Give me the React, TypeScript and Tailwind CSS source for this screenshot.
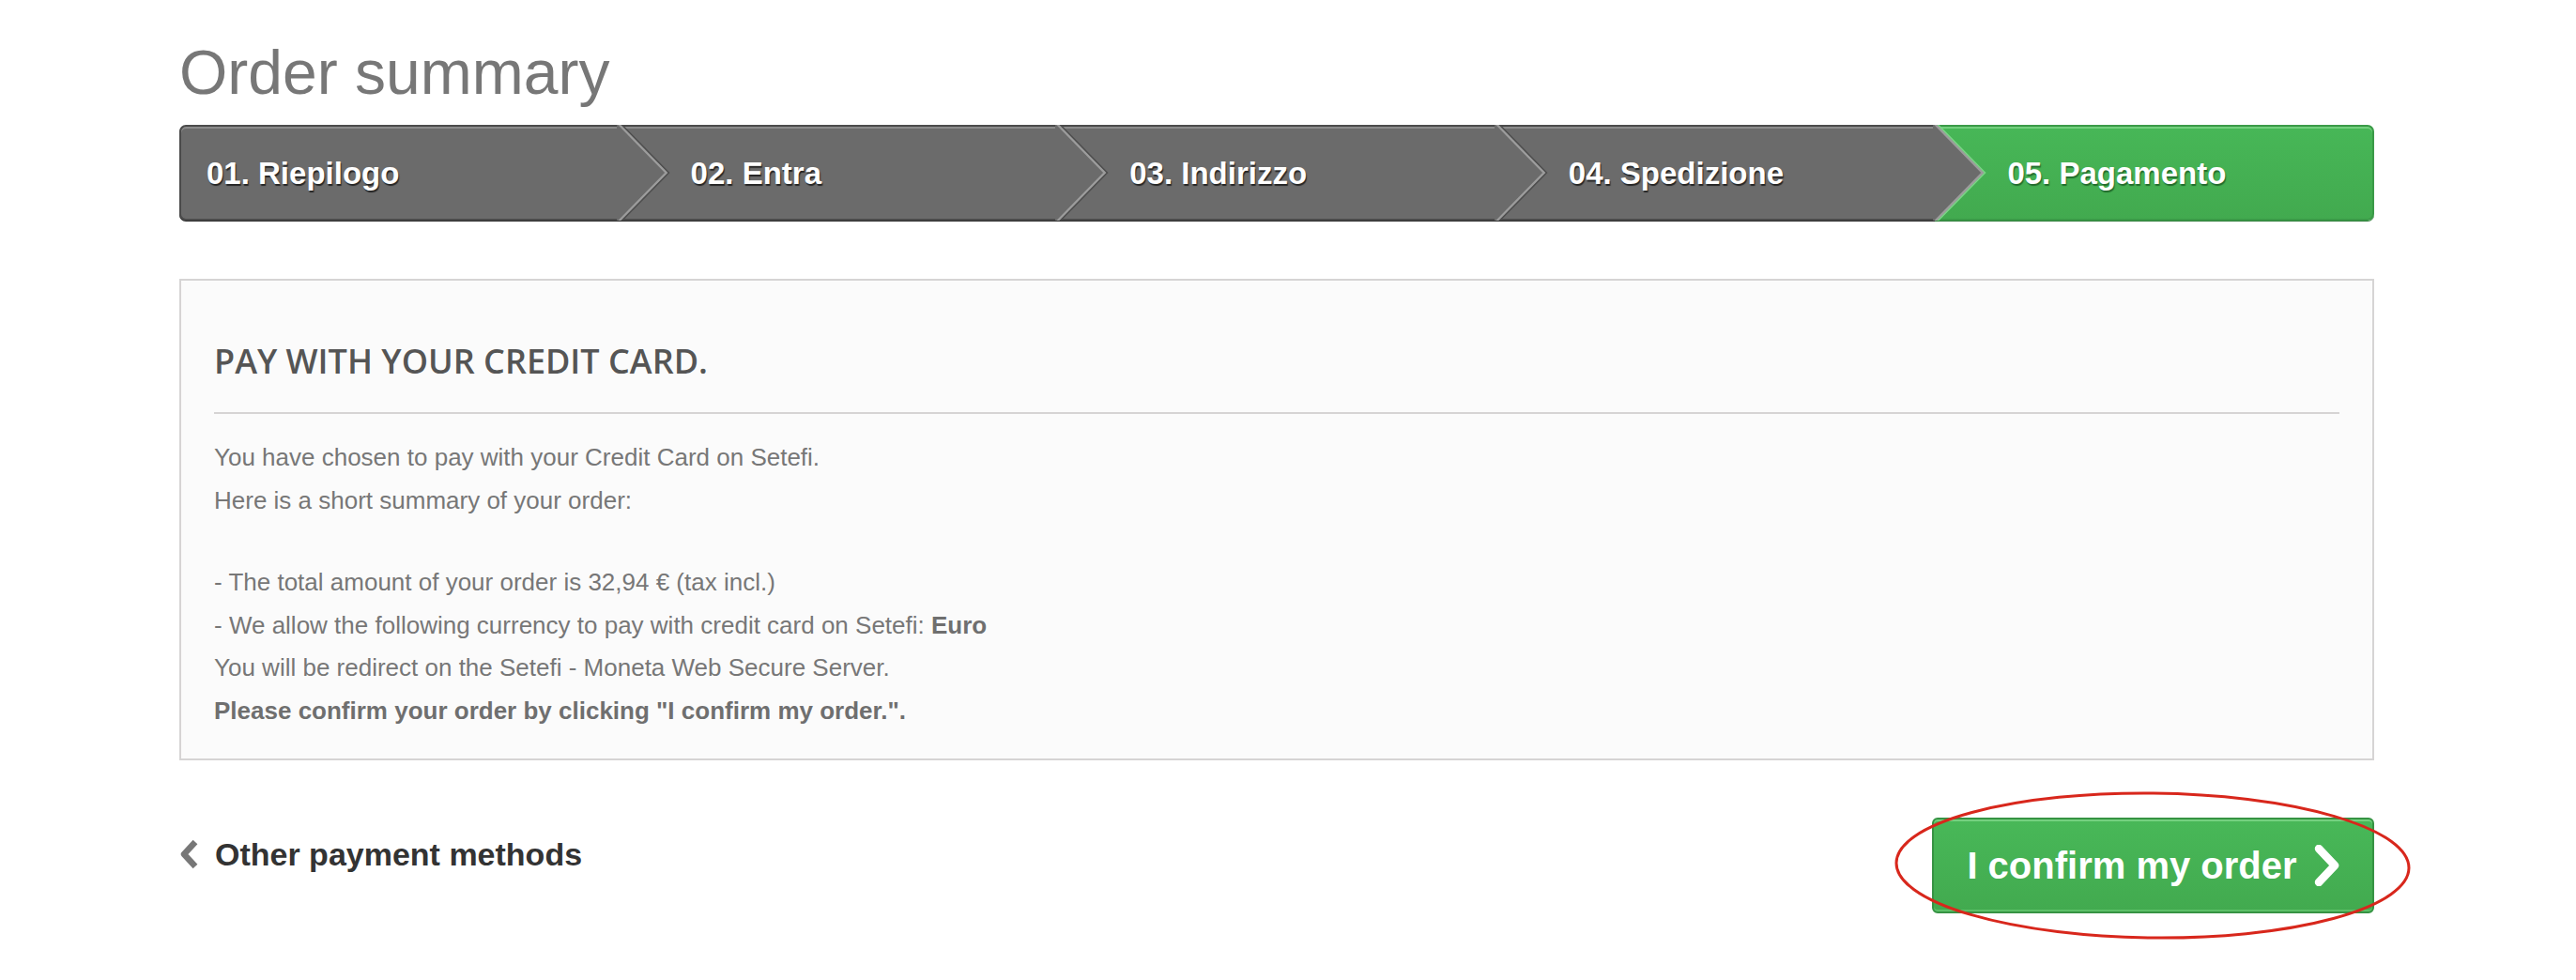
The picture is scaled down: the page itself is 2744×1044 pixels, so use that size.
import clsx from 'clsx'

const steps = ['01. Riepilogo', '02. Entra', '03. Indirizzo', '04. Spedizione', '05. Pagamento']

function StepArrow({ edge }: { edge: string }) {
  return (
    <svg
      className="absolute -top-[2px] -right-[56px] z-10 h-[102px] w-[58px]"
      viewBox="0 0 58 102"
      fill="none"
    >
      <polygon points="0,0 2,0 53,51 2,102 0,102" fill="#6b6b6b" />
      <polyline points="2,-1 53,51 2,103" stroke="#9c9c9c" strokeWidth="2.5" />
      <polyline points="4.5,-1 55.5,51 4.5,103" stroke={edge} strokeWidth="1.5" />
    </svg>
  )
}

function ChevronLeft() {
  return (
    <svg width="22" height="32" viewBox="0 0 22 32" fill="none">
      <polyline points="17,3 5,16 17,29" stroke="#777" strokeWidth="6.5" strokeLinejoin="round" />
    </svg>
  )
}

function ChevronRight() {
  return (
    <svg width="30" height="44" viewBox="0 0 30 44" fill="none">
      <polyline points="6,4 23,22 6,40" stroke="#fff" strokeWidth="8.5" strokeLinecap="round" strokeLinejoin="round" />
    </svg>
  )
}

export default function App() {
  return (
    <div className="min-h-[1044px] bg-white font-['Liberation_Sans',Arial,sans-serif]">
      <div className="ml-[191px] w-[2338px] pt-[44px]">
        <h1 className="text-[66px] font-normal leading-none text-[#777]">Order summary</h1>

        {/* checkout steps */}
        <div className="mt-[23px] flex h-[102px]">
          {steps.map((s, i) => {
            const active = i === 4
            return (
              <div
                key={s}
                className={clsx(
                  'relative flex w-[20%] shrink-0 items-center border-y-2',
                  i === 0 ? 'rounded-l-[7px] border-l-2 pl-[27px]' : 'pl-[77px]',
                  i === 4 && 'rounded-r-[7px] border-r-2',
                  active
                    ? 'border-[#3a9a47] bg-gradient-to-b from-[#47b757] to-[#42aa4f] shadow-[inset_0_2px_0_#72cf7d,0_1px_0_#2f7d3a]'
                    : 'border-[#4b4b4b] bg-[#6b6b6b] shadow-[inset_0_2px_0_#8b8b8b,0_1px_0_#2c2c2c]'
                )}
              >
                <span
                  className={clsx(
                    'text-[33px] font-bold leading-none text-white',
                    active
                      ? '[text-shadow:1px_2px_1px_rgba(20,80,30,0.7)]'
                      : '[text-shadow:1px_2px_1px_rgba(0,0,0,0.65)]'
                  )}
                >
                  {s}
                </span>
                {i < 4 && <StepArrow edge={i === 3 ? '#7cd487' : '#4e4e4e'} />}
              </div>
            )
          })}
        </div>

        {/* payment box */}
        <div className="mt-[62px] border-2 border-[#d6d4d4] bg-[#fbfbfb] px-[35px] pb-[28px] pt-[63px]">
          <h3 className="border-b-2 border-[#d6d4d4] pb-[32px] font-['Open_Sans',sans-serif] text-[36px] font-semibold uppercase leading-[45px] text-[#555]">
            Pay with your credit card.
          </h3>
          <div className="text-[26px] leading-[45.5px] text-[#777]">
            <p className="mt-[24px]">
              You have chosen to pay with your Credit Card on Setefi.
              <br />
              Here is a short summary of your order:
            </p>
            <p className="mt-[42px]">
              - The total amount of your order is 32,94 € (tax incl.)
              <br />
              - We allow the following currency to pay with credit card on Setefi: <b className="text-[#6f6f6f]">Euro</b>
              <br />
              You will be redirect on the Setefi - Moneta Web Secure Server.
              <br />
              <b className="text-[#6f6f6f]">Please confirm your order by clicking "I confirm my order.".</b>
            </p>
          </div>
        </div>

        {/* actions */}
        <div className="mt-[61px] flex items-start justify-between">
          <a className="mt-[19px] flex items-center gap-[16px] text-[34px] font-bold leading-[40px] text-[#333]">
            <ChevronLeft />
            Other payment methods
          </a>
          <div className="relative">
            <button className="flex h-[102px] w-[471px] items-center justify-center gap-[17px] rounded-[6px] border-2 border-[#369343] bg-gradient-to-b from-[#48b858] to-[#42aa4f] pl-[2px] text-[40px] font-bold text-white shadow-[inset_0_2px_0_#74d07f,inset_0_-2px_0_#5cc068]">
              I confirm my order
              <ChevronRight />
            </button>
            <svg
              className="pointer-events-none absolute -left-[45px] -top-[34px] h-[170px] w-[560px] rotate-[0.6deg]"
              viewBox="0 0 560 170"
              fill="none"
            >
              <ellipse cx="280" cy="85" rx="273" ry="77" stroke="#d8271c" strokeWidth="3" />
            </svg>
          </div>
        </div>
      </div>
    </div>
  )
}
